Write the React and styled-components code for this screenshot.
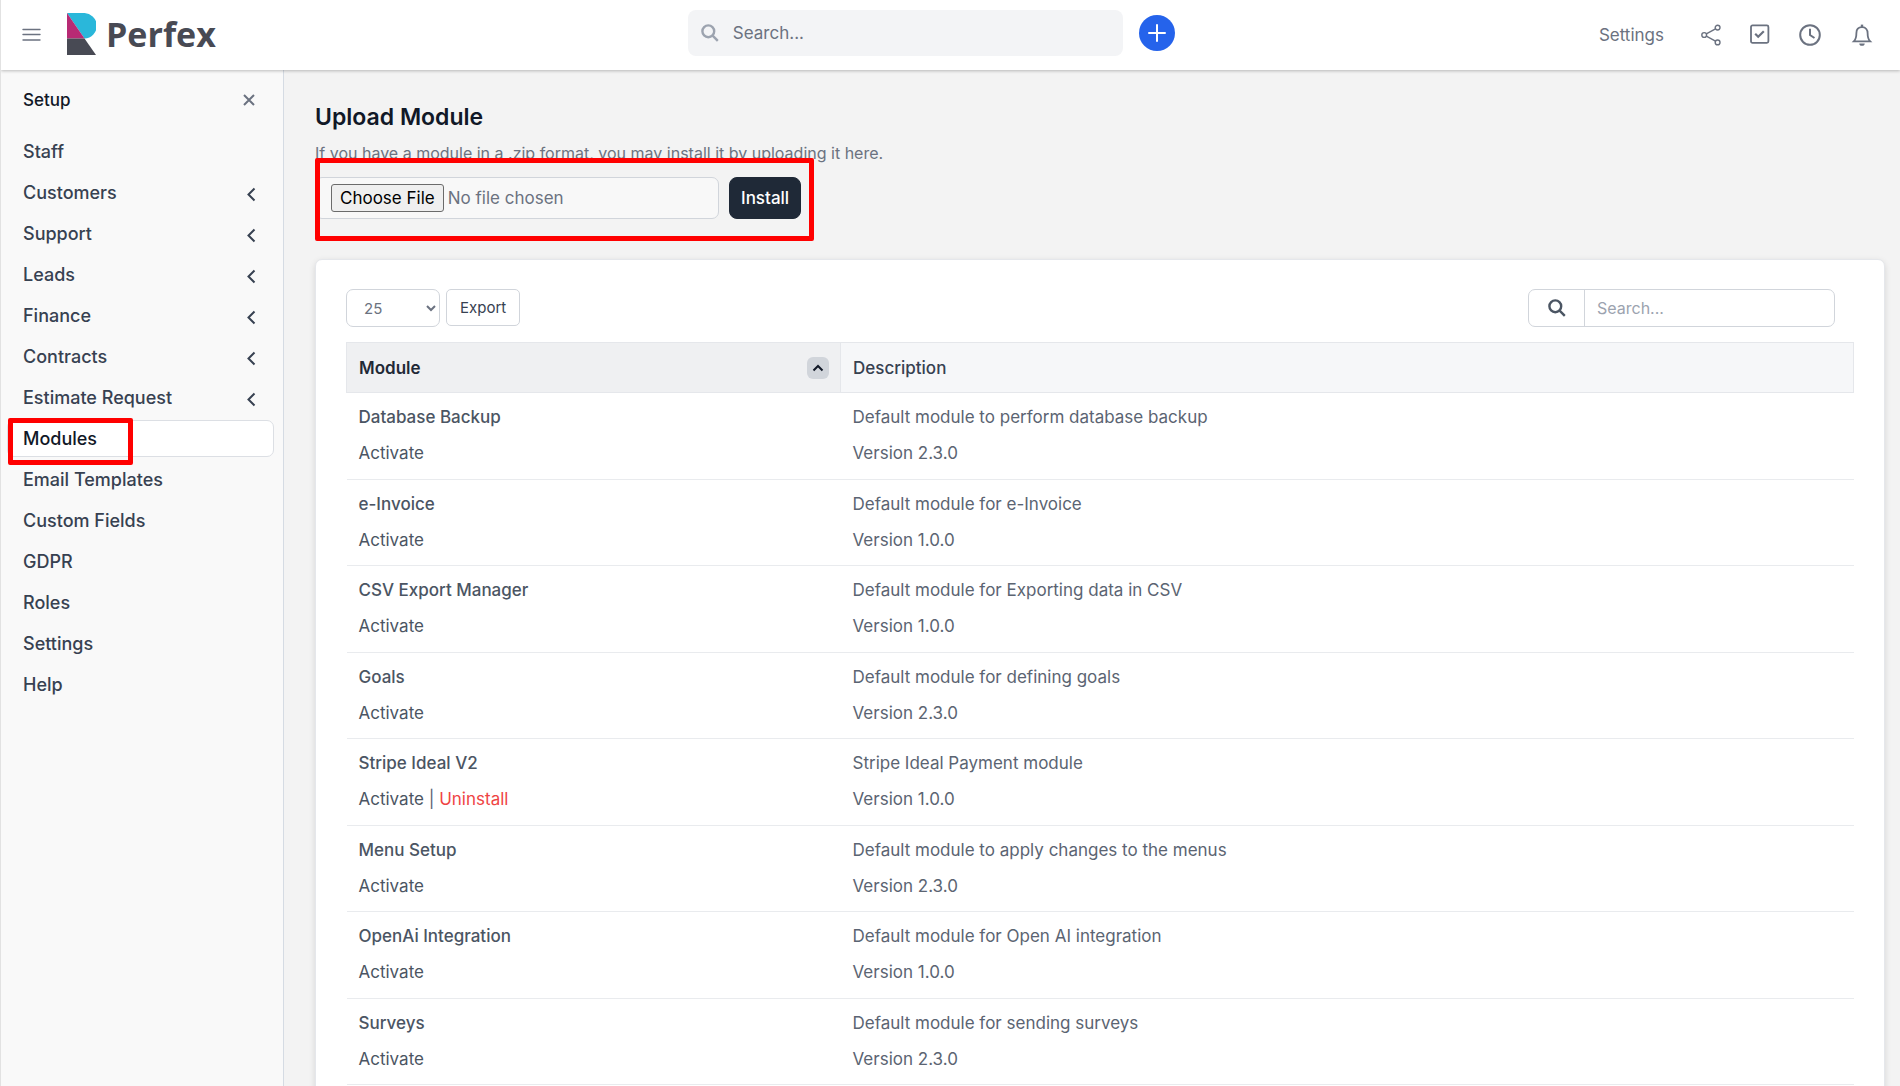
import React from 'react'
import styled, { createGlobalStyle, css } from 'styled-components'

const GlobalStyle = createGlobalStyle`
  * {
    box-sizing: border-box;
  }
  body {
    margin: 0;
    height: 100vh;
    overflow: hidden;
    background-color: #f3f3f3;
    color: #4b5563;
    font-family: Inter, 'Liberation Sans', sans-serif;
    font-size: 16px;
    line-height: 24px;
  }
  button, input, select {
    font-family: inherit;
  }
`
const Page = styled.div`
  height: 100vh;
  display: flex;
  flex-direction: column;
  overflow: hidden;
  border-left: 1px solid #e2e2e2;
`
const Header = styled.header`
  height: 70px;
  flex-shrink: 0;
  display: grid;
  grid-template-columns: 20fr 487px 21fr;
  align-items: center;
  padding: 0 26px 0 21px;
  background-color: #ffffff;
  box-shadow: 0 1px 3px rgba(0, 0, 0, 0.25);
  z-index: 1;
`
const Brand = styled.div`
  display: flex;
  align-items: center;
  gap: 26px;
`
const IconButton = styled.button`
  display: flex;
  padding: 0;
  border: none;
  background: none;
  color: #6b7280;
  cursor: pointer;
`
const Logo = styled.a`
  display: flex;
  align-items: center;
  gap: 10px;
  padding-bottom: 2px;
  color: #484a54;
  font-family: 'Open Sans', 'Noto Sans', sans-serif;
  font-size: 34px;
  font-weight: 700;
  line-height: 42px;
  text-decoration: none;
`
const HeaderCenter = styled.div`
  display: flex;
  align-items: center;
  gap: 16px;
  padding-bottom: 5px;
`
const GlobalSearch = styled.label`
  flex: 1;
  height: 46px;
  display: flex;
  align-items: center;
  gap: 14px;
  padding: 0 13px;
  border-radius: 8px;
  background-color: #f3f4f6;
  color: #9ca3af;
`
const GlobalInput = styled.input`
  flex: 1;
  min-width: 0;
  padding: 0;
  border: none;
  outline: none;
  background: none;
  font-size: 17px;
  color: #4b5563;

  &::placeholder {
    color: #6b7280;
  }
`
const AddButton = styled.button`
  width: 36px;
  height: 36px;
  display: flex;
  align-items: center;
  justify-content: center;
  padding: 0;
  border: none;
  border-radius: 50%;
  background-color: #2563eb;
  color: #ffffff;
  cursor: pointer;
`
const HeaderRight = styled.nav`
  display: flex;
  align-items: center;
  justify-content: flex-end;
  gap: 29px;
`
const HeaderLink = styled.a`
  margin-right: 8px;
  color: #6b7280;
  font-size: 17px;
  text-decoration: none;
`
const Body = styled.div`
  flex: 1;
  min-height: 0;
  display: flex;
`
const Sidebar = styled.aside`
  width: 283px;
  flex-shrink: 0;
  padding: 11px 9px 0 6px;
  border-right: 1px solid #d5dbe3;
  background-color: #f9f9f9;
`
const SidebarTop = styled.div`
  height: 37px;
  display: flex;
  align-items: center;
  justify-content: space-between;
  margin-bottom: 15px;
  padding: 0 18px 0 16px;
`
const SidebarTitle = styled.h2`
  margin: 0;
  color: #111827;
  font-size: 17px;
  font-weight: 500;
`
const Menu = styled.ul`
  display: flex;
  flex-direction: column;
  gap: 4px;
  margin: 0;
  padding: 0;
  list-style: none;
`
const MenuItem = styled.li`
  position: relative;
`
const MenuLink = styled.a`
  height: 37px;
  display: flex;
  align-items: center;
  justify-content: space-between;
  padding: 0 17px 0 15px;
  border: 1px solid transparent;
  border-radius: 7px;
  color: #374151;
  font-size: 18px;
  font-weight: 500;
  text-decoration: none;

  ${(props) =>
    props.$active &&
    css`
      border-color: #dcdfe4;
      background-color: #ffffff;
      color: #111827;
    `}
`
const Highlight = styled.span`
  position: absolute;
  inset: ${(props) => props.$inset};
  border: 5px solid #ff0000;
  border-radius: 2px;
  pointer-events: none;
`
const Main = styled.main`
  flex: 1;
  min-width: 0;
  padding: 31px 15px 0 31px;
`
const Title = styled.h1`
  margin: 0 0 8px;
  color: #111827;
  font-size: 23px;
  font-weight: 600;
  line-height: 32px;
`
const Hint = styled.p`
  margin: 0;
  color: #6b7280;
`
const UploadForm = styled.form`
  position: relative;
  width: fit-content;
  display: flex;
  gap: 10px;
  margin: 12px 0 40px;
`
const FileInput = styled.input`
  width: 404px;
  height: 42px;
  padding: 6px 15px;
  border: 1px solid #d1d5db;
  border-radius: 7px;
  background-color: #f8f8f8;
  color: #6b7280;
  font-size: 17px;
  line-height: 24px;

  &::file-selector-button {
    height: 28px;
    padding: 0 8px;
    border: 1px solid #6b6b6b;
    border-radius: 3px;
    background-color: #efefef;
    color: #000000;
    font-family: inherit;
    font-size: 17px;
  }
`
const InstallButton = styled.button`
  height: 42px;
  padding: 0 11px;
  border: 1px solid #1f2937;
  border-radius: 8px;
  background-color: #1f2937;
  color: #ffffff;
  font-size: 17px;
  font-weight: 500;
  cursor: pointer;
`
const Card = styled.section`
  height: 100%;
  padding: 29px 30px;
  border: 1px solid #e5e7eb;
  border-radius: 7px;
  background-color: #ffffff;
  box-shadow: 0 2px 6px rgba(0, 0, 0, 0.12);
`
const Toolbar = styled.div`
  display: flex;
  align-items: flex-start;
  gap: 6px;
  margin-bottom: 15px;
`
const LengthSelect = styled.select`
  width: 94px;
  height: 38px;
  padding: 0 0 0 13px;
  border: 1px solid #d1d5db;
  border-radius: 7px;
  background-color: #ffffff;
  color: #6b7280;
  font-size: 15px;
`
const ExportButton = styled.button`
  height: 37px;
  padding: 0 13px;
  border: 1px solid #d1d5db;
  border-radius: 5px;
  background-color: #ffffff;
  color: #374151;
  font-size: 15px;
  cursor: pointer;
`
const TableSearch = styled.label`
  width: 307px;
  height: 38px;
  display: flex;
  margin: 0 19px 0 auto;
  border: 1px solid #d1d5db;
  border-radius: 7px;
  color: #4b5563;
`
const SearchAddon = styled.span`
  width: 56px;
  display: flex;
  align-items: center;
  justify-content: center;
  border-right: 1px solid #d1d5db;
`
const TableInput = styled.input`
  flex: 1;
  min-width: 0;
  padding: 0 12px;
  border: none;
  outline: none;
  background: none;
  font-size: 16px;

  &::placeholder {
    color: #9ca3af;
  }
`
const Table = styled.table`
  width: 100%;
  table-layout: fixed;
  border-collapse: collapse;
  font-size: 17px;
`
const HeadCell = styled.th`
  width: ${(props) => props.$width};
  height: 50px;
  padding: 0 11px 0 12px;
  border: 1px solid #e5e7eb;
  background-color: ${(props) => (props.$sorted ? '#eff0f2' : '#f6f7f9')};
  color: ${(props) => (props.$sorted ? '#1f2937' : '#374151')};
  font-weight: ${(props) => (props.$sorted ? 600 : 500)};
  text-align: left;
`
const HeadLabel = styled.span`
  display: flex;
  align-items: center;
  justify-content: space-between;
`
const SortButton = styled.button`
  width: 22px;
  height: 22px;
  display: flex;
  align-items: center;
  justify-content: center;
  padding: 0;
  border: none;
  border-radius: 6px;
  background-color: #d1d5db;
  color: #111827;
`
const Row = styled.tr`
  height: 87px;
  border-bottom: 1px solid #e9ebee;

  &:nth-child(even) {
    height: 86px;
  }
`
const Cell = styled.td`
  padding: 12px 12px 0;
  vertical-align: top;
`
const Line = styled.div`
  margin-bottom: 12px;
  color: ${(props) => (props.$strong ? '#4b5563' : '#5b6472')};
  font-weight: ${(props) => (props.$strong ? 500 : 400)};
`
const Action = styled.a`
  color: ${(props) => (props.$danger ? '#ef4444' : '#4b5563')};
  text-decoration: none;
`

const menu = [
  { label: 'Staff' },
  { label: 'Customers', nested: true },
  { label: 'Support', nested: true },
  { label: 'Leads', nested: true },
  { label: 'Finance', nested: true },
  { label: 'Contracts', nested: true },
  { label: 'Estimate Request', nested: true },
  { label: 'Modules', active: true },
  { label: 'Email Templates' },
  { label: 'Custom Fields' },
  { label: 'GDPR' },
  { label: 'Roles' },
  { label: 'Settings' },
  { label: 'Help' },
]

const modules = [
  { name: 'Database Backup', description: 'Default module to perform database backup', version: '2.3.0' },
  { name: 'e-Invoice', description: 'Default module for e-Invoice', version: '1.0.0' },
  { name: 'CSV Export Manager', description: 'Default module for Exporting data in CSV', version: '1.0.0' },
  { name: 'Goals', description: 'Default module for defining goals', version: '2.3.0' },
  { name: 'Stripe Ideal V2', description: 'Stripe Ideal Payment module', version: '1.0.0', removable: true },
  { name: 'Menu Setup', description: 'Default module to apply changes to the menus', version: '2.3.0' },
  { name: 'OpenAi Integration', description: 'Default module for Open AI integration', version: '1.0.0' },
  { name: 'Surveys', description: 'Default module for sending surveys', version: '2.3.0' },
]

const Icon = ({ width = 20, height = 20, stroke = 2, children }) => (
  <svg
    width={width}
    height={height}
    viewBox={`0 0 ${width} ${height}`}
    fill='none'
    stroke='currentColor'
    strokeWidth={stroke}
    aria-hidden='true'
  >
    {children}
  </svg>
)

const SearchIcon = () => (
  <Icon width={18} height={18} stroke={2.4}>
    <circle cx='7.3' cy='7.3' r='5.9' />
    <path d='M11.6 11.6l5.2 5.2' />
  </Icon>
)

const App = () => {
  return (
    <Page>
      <GlobalStyle />
      <Header>
        <Brand>
          <IconButton aria-label='Toggle menu'>
            <Icon width={19} height={14} stroke={1.4}>
              <path d='M1 1.500h17M1 6.500h17M1 12h17' strokeLinecap='round' />
            </Icon>
          </IconButton>
          <Logo href='#'>
            <svg width='29' height='42' viewBox='0 0 29 42' aria-hidden='true'>
              <path d='M0 0h16.5a12.7 12.7 0 0 1 1 25.5z' fill='#2ab7da' />
              <path d='M0 0l17.5 25.5H0z' fill='#b72a74' />
              <path d='M0 25.5h17.5L29 42H0z' fill='#484a54' />
            </svg>
            Perfex
          </Logo>
        </Brand>
        <HeaderCenter>
          <GlobalSearch>
            <SearchIcon />
            <GlobalInput type='text' placeholder='Search...' aria-label='Search' />
          </GlobalSearch>
          <AddButton aria-label='Add'>
            <Icon width={18} height={18}>
              <path d='M9 1v16M1 9h16' strokeLinecap='round' />
            </Icon>
          </AddButton>
        </HeaderCenter>
        <HeaderRight>
          <HeaderLink href='#'>Settings</HeaderLink>
          <IconButton aria-label='Share'>
            <Icon width={20} height={22} stroke={1.4}>
              <circle cx='3.2' cy='11' r='2.4' />
              <circle cx='16.6' cy='3.6' r='2.4' />
              <circle cx='16.6' cy='18.4' r='2.4' />
              <path d='M5.3 9.8l9.200-5M5.3 12.2l9.200 5' />
            </Icon>
          </IconButton>
          <IconButton aria-label='To do'>
            <Icon width={20} height={22} stroke={1.8}>
              <rect x='1' y='1.400' width='17.400' height='17.400' rx='1.5' />
              <path d='M5.200 9.800l3 3 5.600-5.600' stroke='currentColor' strokeWidth='2.200' />
            </Icon>
          </IconButton>
          <IconButton aria-label='Timers'>
            <Icon width={22} height={22}>
              <circle cx='11' cy='11' r='9.8' />
              <path d='M11 4.800V11l4.500 3' />
            </Icon>
          </IconButton>
          <IconButton aria-label='Notifications'>
            <Icon width={24} height={22} stroke={1.8}>
              <path d='M12 3.200c-4 0-5.600 2.900-5.600 5.800 0 4.400-.9 6.700-2.600 8.400h16.400c-1.700-1.700-2.600-4-2.600-8.400 0-2.900-1.600-5.800-5.600-5.800z' />
              <path d='M12 .6v2.600' strokeWidth='2.400' />
              <path d='M9.300 19.400h5.400a2.700 2.300 0 0 1-5.400 0z' fill='currentColor' stroke='none' />
            </Icon>
          </IconButton>
        </HeaderRight>
      </Header>
      <Body>
        <Sidebar>
          <SidebarTop>
            <SidebarTitle>Setup</SidebarTitle>
            <IconButton aria-label='Close setup menu'>
              <Icon width={14} height={14}>
                <path d='M2 2l10 10M12 2L2 12' />
              </Icon>
            </IconButton>
          </SidebarTop>
          <Menu>
            {menu.map((item) => (
              <MenuItem key={item.label}>
                <MenuLink href='#' $active={item.active}>
                  {item.label}
                  {item.nested && (
                    <Icon width={10} height={18}>
                      <path d='M8.500 4.500L2.500 10.500l6 6' />
                    </Icon>
                  )}
                </MenuLink>
                {item.active && <Highlight $inset='-2px 141px -8px 1px' />}
              </MenuItem>
            ))}
          </Menu>
        </Sidebar>
        <Main>
          <Title>Upload Module</Title>
          <Hint>If you have a module in a .zip format, you may install it by uploading it here.</Hint>
          <UploadForm>
            <FileInput type='file' aria-label='Module file' />
            <InstallButton type='button'>Install</InstallButton>
            <Highlight $inset='-19px -13px -22px 0' />
          </UploadForm>
          <Card>
            <Toolbar>
              <LengthSelect defaultValue='25' aria-label='Rows per page'>
                <option>25</option>
                <option>50</option>
                <option>100</option>
              </LengthSelect>
              <ExportButton>Export</ExportButton>
              <TableSearch>
                <SearchAddon>
                  <SearchIcon />
                </SearchAddon>
                <TableInput type='search' placeholder='Search...' aria-label='Search modules' />
              </TableSearch>
            </Toolbar>
            <Table>
              <thead>
                <tr>
                  <HeadCell $sorted $width='494px'>
                    <HeadLabel>
                      Module
                      <SortButton aria-label='Sort by module'>
                        <Icon width={12} height={8}>
                          <path d='M1.500 6.500L6 2l4.500 4.500' />
                        </Icon>
                      </SortButton>
                    </HeadLabel>
                  </HeadCell>
                  <HeadCell>Description</HeadCell>
                </tr>
              </thead>
              <tbody>
                {modules.map((item) => (
                  <Row key={item.name}>
                    <Cell>
                      <Line $strong>{item.name}</Line>
                      <Line>
                        <Action href='#'>Activate</Action>
                        {item.removable && (
                          <>
                            {' | '}
                            <Action href='#' $danger>Uninstall</Action>
                          </>
                        )}
                      </Line>
                    </Cell>
                    <Cell>
                      <Line>{item.description}</Line>
                      <Line>Version {item.version}</Line>
                    </Cell>
                  </Row>
                ))}
              </tbody>
            </Table>
          </Card>
        </Main>
      </Body>
    </Page>
  )
}

export default App
